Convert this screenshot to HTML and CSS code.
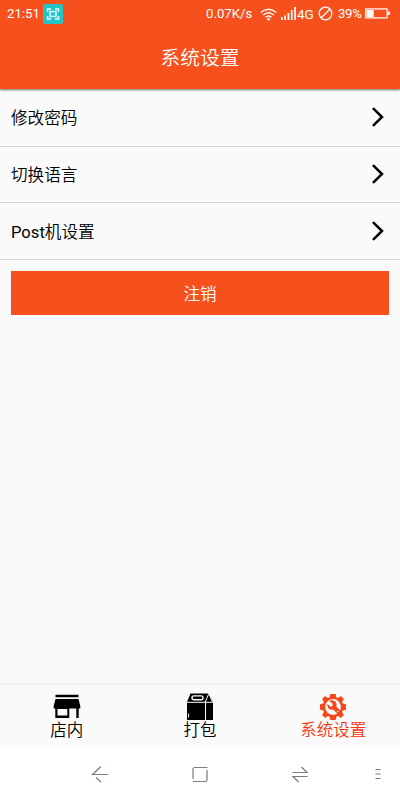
FILE: index.html
```html
<!DOCTYPE html>
<html lang="zh-CN">
<head>
<meta charset="utf-8">
<title>系统设置</title>
<link rel="stylesheet" href="styles.css">
</head>
<body>
<div class="app">
  <header class="header">
    <div class="status">
      <span class="clock">21:51</span>
      <svg class="capture" width="20" height="20" viewBox="0 0 20 20"><rect width="20" height="20" rx="2.5" fill="#20c5c7"/><g fill="none" stroke="#e4ffff" stroke-width="1.5"><path d="M4.5 8V5H8M12 5h3.500v3M15.500 12v3H12M8 15H4.500v-3"/><rect x="7" y="7.500" width="6" height="5"/></g></svg>
      <span class="speed">0.07K/s</span>
      <svg class="wifi" width="17" height="13" viewBox="0 0 17 13" fill="none" stroke="#fff" stroke-width="1.400"><path d="M.7 4.500Q8.500-2.200 16.300 4.500M3.100 7Q8.500 2.300 13.900 7M5.500 9.300Q8.500 6.700 11.500 9.300"/><circle cx="8.500" cy="11.200" r="1.300" fill="#fff" stroke="none"/></svg>
      <svg class="signal" width="16" height="13" viewBox="0 0 16 13" fill="#fff"><path d="M0 10h1.700v3H0zM3.300 8.500H5V13H3.300zM6.600 6h1.700v7H6.600zM9.900 3h1.700v10H9.900zM13.200 0h1.700v13h-1.700z"/></svg>
      <span class="network">4G</span>
      <svg class="blocked" width="15" height="15" viewBox="0 0 15 15" fill="none" stroke="#fff" stroke-width="1.300"><circle cx="7.500" cy="7.500" r="6.300"/><path d="M3 12 12 3"/></svg>
      <span class="percent">39%</span>
      <svg class="battery" width="25" height="11" viewBox="0 0 25 11"><rect x=".6" y=".9" width="21.500" height="9" fill="none" stroke="#fff" stroke-width="1.200"/><path d="M1.500 2h7.200v7H1.500zM23 3.600h1.800v3.300H23z" fill="#fff"/></svg>
    </div>
    <h1 class="title">系统设置</h1>
  </header>
  <main class="content">
    <div class="row"><span>修改密码</span><svg class="chevron" width="12" height="20" viewBox="0 0 12 20"><path d="M1.700 1.900 10 10l-8.300 8.100"/></svg></div>
    <div class="row"><span>切换语言</span><svg class="chevron" width="12" height="20" viewBox="0 0 12 20"><path d="M1.700 1.900 10 10l-8.300 8.100"/></svg></div>
    <div class="row"><span><span class="latin">Post</span>机设置</span><svg class="chevron" width="12" height="20" viewBox="0 0 12 20"><path d="M1.700 1.900 10 10l-8.300 8.100"/></svg></div>
    <button class="logout">注销</button>
  </main>
  <nav class="tabs">
    <div class="tab">
      <svg width="28" height="28" viewBox="0 0 28 28"><path d="M2.500 1.700h23v2.500h-23zM2.500 6h23L27.300 13v2.500h-1.600V25h-2.400v-9.500h-7V25H2.300v-9.500H.7V13zM4.500 16v6.500h9.800V16z" fill-rule="evenodd"/></svg>
      <span>店内</span>
    </div>
    <div class="tab">
      <svg width="28" height="28" viewBox="0 0 28 28"><path d="M4.500.5h18.500L27 9v18H1V9z"/><g fill="none" stroke="#fafafa" stroke-width="1"><path d="M1 9.300h26M19.500 9.300V27M22.800.5l-3.500 8.500M22.800.5 26.500 9M2.600 20.500v4"/><rect x="6" y="2.900" width="11" height="3.800" rx="1.900" stroke-width="1.400"/></g></svg>
      <span>打包</span>
    </div>
    <div class="tab active">
      <svg width="28" height="28" viewBox="0 0 28 28"><path d="M11.300 1h5.400l.7 3.200 1.700.7 2.800-1.800 3 3-1.800 2.800.7 1.700 3.200.7v5.400l-3.200.7-.7 1.700 1.800 2.800-3 3-2.800-1.800-1.700.7-.7 3.200h-5.400l-.7-3.200-1.700-.7-2.800 1.800-3-3 1.800-2.800-.7-1.700L1 16.700v-5.400l3.200-.7.7-1.700-1.800-2.800 3-3 2.800 1.800 1.700-.7z" fill="#f4471a"/><circle cx="14" cy="14" r="7.900" fill="#fafafa"/><path d="m10.200 8 3.300 2.500.1 2.400-2.100.8-3-2.900a4.600 4.600 0 0 0 5.700 5.800l4.500 4.300 2.900-2.900-4.300-4.400a4.800 4.800 0 0 0-7.100-5.600z" fill="#f4471a"/><circle cx="18.700" cy="18.400" r=".8" fill="#fafafa"/></svg>
      <span>系统设置</span>
    </div>
  </nav>
  <footer class="softkeys">
    <svg viewBox="0 0 20 20"><path d="M18 10.500H2.500L11 2.500M6 13.500l5 4.500"/></svg>
    <svg viewBox="0 0 20 20"><path d="M17.500 3.500H5Q3 3.500 3 5.500V15M3 17.500h12.500q1.500 0 1.500-1.500V6"/></svg>
    <svg viewBox="0 0 20 20"><path d="M2.500 8.500H17L11.500 3M17.500 12.500H3L8.500 18"/></svg>
    <svg class="more" viewBox="0 0 20 20"><path d="M5.500 5.500h5M5.500 10h5M5.500 14.500h5"/></svg>
  </footer>
</div>
</body>
</html>
```
FILE: styles.css
```css
* { box-sizing: border-box; }
body {
  margin: 0;
  font-family: Roboto, "Noto Sans CJK SC", sans-serif;
  font-weight: 350;
  color: #000;
  background: #fafafa;
}
.app { height: 800px; display: flex; flex-direction: column; }
.header {
  height: 89px;
  background: #f6511d;
  color: #fff;
  box-shadow: 0 1px 2px rgba(0, 0, 0, .55);
}
.status {
  height: 28px;
  display: flex;
  align-items: center;
  padding: 0 10px 0 7px;
  font-size: 13.200px;
  font-weight: 400;
  line-height: 28px;
  white-space: nowrap;
}
.clock { width: 36px; }
.speed { margin-left: auto; width: 54px; }
.wifi { margin-right: 4px; }
.signal { margin-top: -2px; }
.network { width: 21px; font-size: 13.500px; letter-spacing: -.2px; }
.blocked { margin: -2px 5px 0 0; }
.percent { width: 27px; letter-spacing: -.3px; }
.battery { margin-top: -2px; }
.title {
  margin: 0;
  height: 61px;
  line-height: 62px;
  text-align: center;
  font-size: 19.800px;
  font-weight: 350;
}
.content { flex: 1; padding-top: 1px; }
.row {
  height: 56.700px;
  display: flex;
  align-items: center;
  justify-content: space-between;
  padding: 0 16px 1px 11px;
  border-bottom: 1px solid #d6d6d6;
  font-size: 16.600px;
}
.latin { font-weight: 400; }
.chevron path { fill: none; stroke: #000; stroke-width: 2.500; stroke-linecap: round; }
.logout {
  display: block;
  width: 378px;
  height: 44.400px;
  margin: 11px auto 0;
  padding: 0;
  border: 0;
  background: #f6511d;
  color: #fff;
  font: inherit;
  font-size: 16.600px;
}
.tabs {
  height: 62px;
  display: flex;
  background: #fafafa;
  box-shadow: 0 -1px 2px rgba(0, 0, 0, .08);
}
.tab {
  flex: 1;
  display: flex;
  flex-direction: column;
  align-items: center;
  padding-top: 8px;
  font-size: 16.500px;
  line-height: 20px;
}
.active { color: #f4370c; }
.softkeys {
  height: 53px;
  display: flex;
  align-items: center;
  padding-left: 90px;
  gap: 80px;
  background: #fff;
}
.softkeys svg { width: 20px; height: 20px; flex: none; fill: none; stroke: #85777c; stroke-width: 1.200; }
.softkeys .more { margin-left: -20px; }
```
